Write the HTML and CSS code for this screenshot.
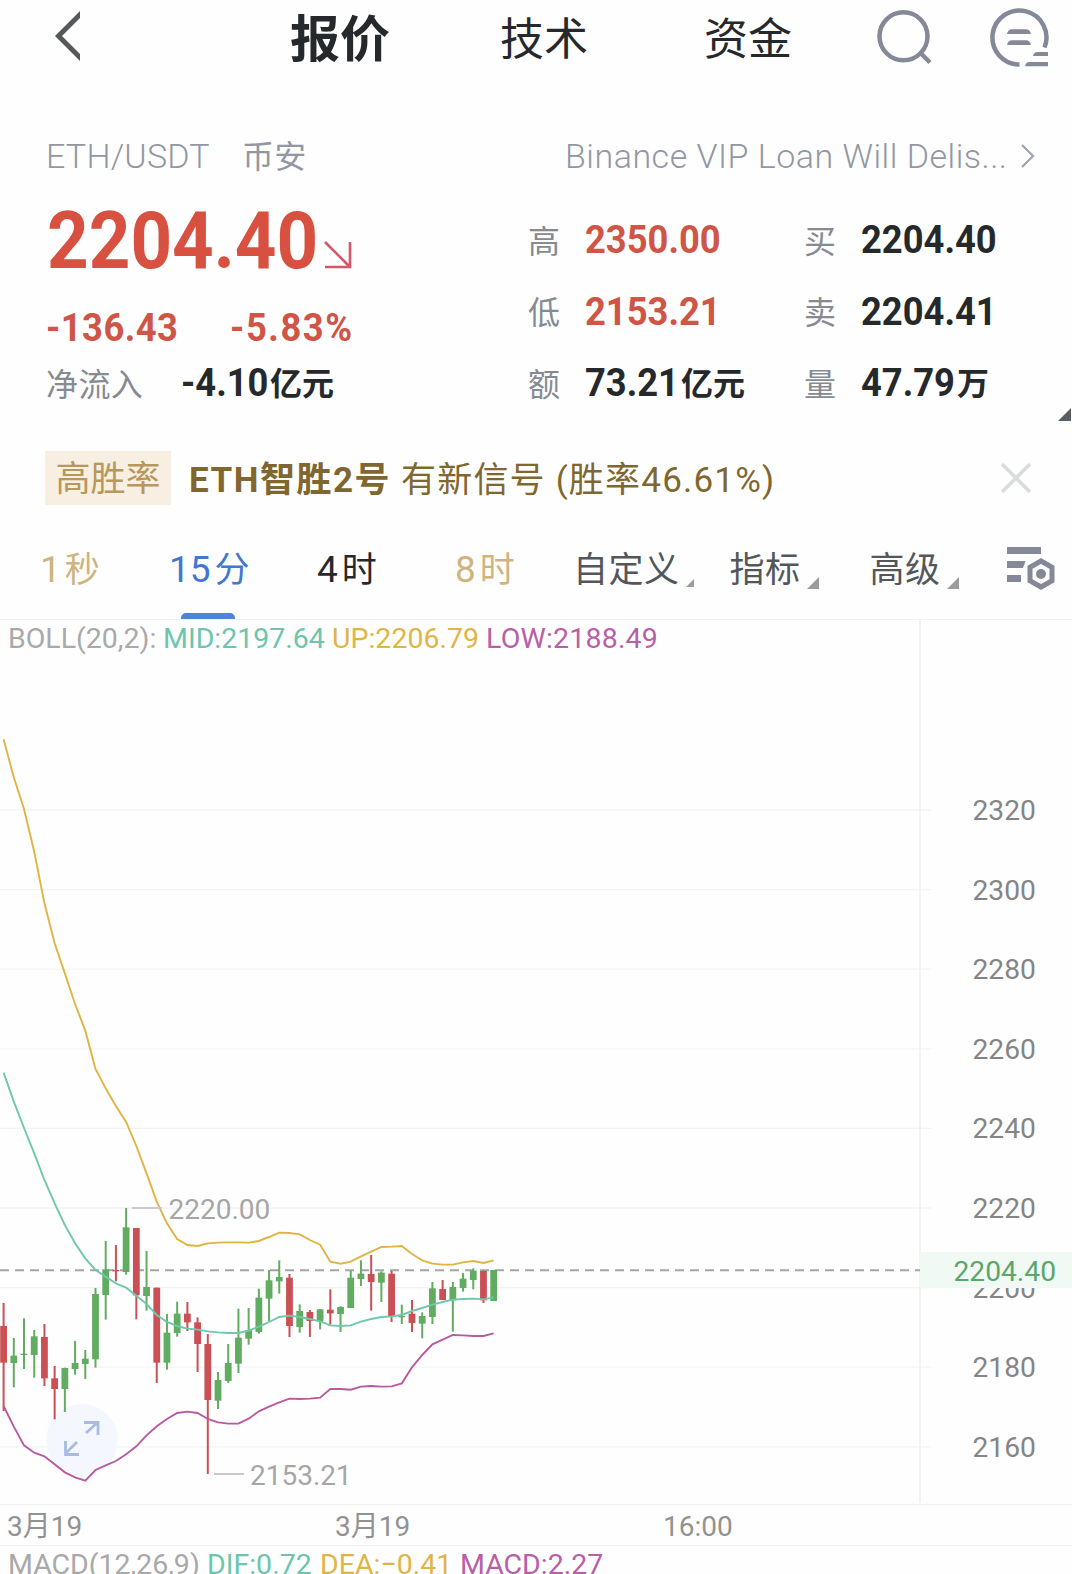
FILE: index.html
```html
<!DOCTYPE html>
<html lang="zh-CN">
<head>
    <meta charset="UTF-8">
    <meta name="viewport" content="width=device-width, initial-scale=1.0">
    <title>ETH/USDT 报价</title>
    <link rel="stylesheet" href="styles.css">
</head>
<body>
    <header class="top-bar">
        <svg class="back" width="30" height="54" viewBox="0 0 30 54"><path d="M28 2 V9 L10 27 L28 45 V52 L3 27z" fill="#53585c"/></svg>
        <nav class="nav">
            <a class="nav-item active">报价</a>
            <a class="nav-item">技术</a>
            <a class="nav-item">资金</a>
        </nav>
        <svg class="search" width="60" height="60" viewBox="0 0 60 60" fill="none" stroke="#858997" stroke-width="4.500">
            <circle cx="29.500" cy="29.300" r="24"/>
            <path d="M46.500 46 L56 55.500"/>
        </svg>
        <svg class="menu" width="62" height="62" viewBox="0 0 62 62">
            <path d="M30.500 58.500 A27 27 0 1 1 55.500 41.500" fill="none" stroke="#858997" stroke-width="4.500"/>
            <path d="M18 28 q1 -4.700 5 -4.700 h14 q4 0 5 4.700z M18 39 q1 -4.700 5 -4.700 h14 q4 0 5 4.700z M44 50 q1 -4 4 -4 h11 v4z M36 60.300 q1 -4.300 4 -4.300 h19 v4.300z" fill="#858997"/>
        </svg>
    </header>

    <div class="symbol-row">
        <span class="symbol">ETH/USDT</span>
        <span class="exchange">币安</span>
        <span class="news">Binance VIP Loan Will Delis...</span>
        <svg width="16" height="26" viewBox="0 0 16 26"><path d="M1 2 L12 13 L1 24" fill="none" stroke="#a0a5ac" stroke-width="2.300"/></svg>
    </div>

    <section class="quote">
        <div class="quote-left">
            <div class="price-row">
                <span class="price">2204.40</span>
                <svg class="trend" width="30" height="30" viewBox="0 0 30 30"><path d="M2 2 L26 26 M27 2 V27 H2" fill="none" stroke="#d9566a" stroke-width="2.600"/></svg>
            </div>
            <div class="change-row">
                <span class="num change">-136.43</span>
                <span class="num percent">-5.83%</span>
            </div>
            <div class="flow-row">
                <span class="label">净流入</span>
                <span class="num">-4.10</span><span class="unit">亿元</span>
            </div>
        </div>
        <div class="quote-right">
            <span class="label">高</span><span class="value red"><span class="num">2350.00</span></span>
            <span class="label">买</span><span class="value"><span class="num">2204.40</span></span>
            <span class="label">低</span><span class="value red"><span class="num">2153.21</span></span>
            <span class="label">卖</span><span class="value"><span class="num">2204.41</span></span>
            <span class="label">额</span><span class="value"><span class="num">73.21</span><span class="unit">亿元</span></span>
            <span class="label">量</span><span class="value"><span class="num">47.79</span><span class="unit">万</span></span>
        </div>
        <i class="corner"></i>
    </section>

    <div class="signal">
        <span class="badge">高胜率</span>
        <b class="signal-name">ETH智胜2号</b>
        <span class="signal-text">有新信号 (胜率46.61%)</span>
        <svg class="close" width="32" height="32" viewBox="0 0 32 32"><path d="M2 2 L30 30 M30 2 L2 30" stroke="#d9dcdd" stroke-width="3.500"/></svg>
    </div>

    <div class="periods">
        <a class="period gold"><span class="n">1</span>秒</a>
        <a class="period selected"><span class="n">15</span>分</a>
        <a class="period"><span class="n">4</span>时</a>
        <a class="period gold"><span class="n">8</span>时</a>
        <a class="period more small">自定义</a>
        <a class="period more">指标</a>
        <a class="period more">高级</a>
        <svg class="settings" width="50" height="44" viewBox="0 0 50 44">
            <path d="M1 1h34v7H1z M1 15h18.500l-2.500 7H1z M1 29h14v7H1z" fill="#858997"/>
            <path d="M35 15 L46 21.300 V34.700 L35 41 L24 34.700 V21.300z" fill="none" stroke="#858997" stroke-width="5"/>
            <circle cx="35" cy="28" r="5" fill="#858997"/>
        </svg>
    </div>

    <div class="chart">
        <div class="legend">
            <span class="boll">BOLL(20,2):</span>
            <span class="mid">MID:2197.64</span>
            <span class="up">UP:2206.79</span>
            <span class="low">LOW:2188.49</span>
        </div>
        <svg id="kline" width="1072" height="883" viewBox="0 620 1072 883">
            <g id="grid"></g>
            <circle cx="82" cy="1440" r="36" fill="#f4f8fe"/>
            <path d="M86 1433 L98 1422 M84 1422.500 H98 V1435 M77 1442 L66 1453 M65.500 1441 V1454.500 H79" fill="none" stroke="#a9bce0" stroke-width="2.800"/>
            <path d="M0 1270.300 H920" stroke="#a5a5a5" stroke-width="2" stroke-dasharray="9 6"/>
            <g id="candles"></g>
            <g id="lines" fill="none" stroke-width="1.900"></g>
            <path d="M132 1208 H162 M214 1474 H244" stroke="#c9c9c9" stroke-width="1.800"/>
            <g class="marks">
                <text x="168.500" y="1218.500">2220.00</text>
                <text x="250" y="1485">2153.21</text>
            </g>
            <rect x="920" y="1252" width="152" height="36" fill="#f1f9f4"/>
            <text class="current" x="953.500" y="1281">2204.40</text>
        </svg>
    </div>

    <div class="dates">
        <span>3月19</span>
        <span>3月19</span>
        <span>16:00</span>
    </div>
    <div class="legend macd">
        <span class="boll">MACD(12,26,9)</span>
        <span class="mid">DIF:0.72</span>
        <span class="up">DEA:−0.41</span>
        <span class="low">MACD:2.27</span>
    </div>

    <script>
        // color, high, body top, body bottom, low
        var candles = [
            ["r",369,438,548,693], ["g",474,527,549,622], ["g",415,521,525,567], ["g",450,469,525,593],
            ["r",432,471,595,618], ["r",558,595,627,718], ["g",563,564,627,696], ["g",483,549,567,584],
            ["g",510,536,552,597], ["g",324,342,538,563], ["g",183,268,345,419], ["r",195,270,274,304],
            ["g",84,142,276,284], ["r",144,144,346,418], ["g",213,321,348,392], ["r",323,323,548,609],
            ["g",402,458,548,569], ["g",365,401,459,470], ["r",366,401,427,453], ["r",412,427,492,576],
            ["r",462,492,660,882], ["g",576,600,662,687], ["g",492,549,603,609], ["g",386,473,551,579],
            ["g",384,450,476,494], ["g",326,353,456,461], ["g",270,301,356,424], ["g",241,291,304,341],
            ["r",282,293,438,471], ["g",373,393,441,458], ["r",390,396,423,471], ["g",387,388,424,448],
            ["r",328,389,400,434], ["g",379,381,402,456], ["g",272,293,384,384], ["g",241,281,297,318],
            ["r",225,282,306,392], ["g",274,278,308,366], ["r",273,281,408,426], ["g",374,408,412,432],
            ["r",360,401,429,456], ["g",397,408,431,475], ["g",306,325,411,432], ["r",300,327,360,360],
            ["g",306,321,361,455], ["g",279,296,324,335], ["g",265,272,300,328], ["r",272,273,361,369],
            ["g",270,270,363,363]
        ];
        var lines = {
            "#dfb443": [-1322,-1208,-1113,-985,-830,-710,-620,-528,-448,-333,-275,-222,-174,-102,-20,65,130,177,195,198,190,188,187,187,188,183,171,158,159,163,180,194,245,251,245,229,215,201,200,198,222,241,251,254,254,247,243,249,241],
            "#6fc7ae": [-322,-235,-156,-80,0,70,135,190,235,270,290,310,323,347,372,405,426,438,446,449,454,457,459,459,452,440,426,411,407,411,417,424,436,438,436,425,417,411,409,405,393,384,374,366,359,357,356,358,352],
            "#b95a9f": [678,740,796,818,829,853,877,892,902,870,856,843,823,799,766,739,717,699,695,699,717,727,731,731,716,694,680,667,656,657,656,653,627,627,629,620,618,620,619,610,562,525,493,479,465,466,468,468,460]
        };

        function x(i) { return 3.600 + i * 10.210; }
        function y(v) { return 1180 + v / 3; }

        var html = "";
        for (var i = 0; i < 9; i++) {
            var gy = 810 + i * 79.600;
            html += '<path d="M0 ' + gy + ' H931" stroke="#f3f3f3" stroke-width="1.300"/>';
            html += '<text x="972.500" y="' + (gy + 10) + '">' + (2320 - i * 20) + '</text>';
        }
        html += '<path d="M920 620 V1503" stroke="#f1f1f1" stroke-width="1.800"/>';
        document.getElementById("grid").innerHTML = html;

        html = "";
        candles.forEach(function(c, i) {
            var color = c[0] == "r" ? "#cb5055" : "#62ac62";
            html += '<path d="M' + x(i) + ' ' + y(c[1]) + ' V' + y(c[4]) + '" stroke="' + color + '" stroke-width="2"/>';
            html += '<rect x="' + (x(i) - 3.400) + '" y="' + y(c[2]) + '" width="6.800" height="' + (c[3] - c[2]) / 3 + '" fill="' + color + '"/>';
        });
        document.getElementById("candles").innerHTML = html;

        html = "";
        for (var color in lines) {
            var points = lines[color].map(function(v, i) { return x(i) + "," + y(v); });
            html += '<polyline points="' + points.join(" ") + '" stroke="' + color + '"/>';
        }
        document.getElementById("lines").innerHTML = html;
    </script>
</body>
</html>
```
FILE: styles.css
```css
* {
    box-sizing: border-box;
}
body {
    margin: 0;
    width: 1072px;
    height: 1574px;
    overflow: hidden;
    background-color: #fefefe;
    color: #26292c;
    font-family: Roboto, "Noto Sans CJK SC", sans-serif;
    line-height: 1.2;
}
svg {
    display: block;
    flex: none;
}
.top-bar {
    display: flex;
    align-items: center;
    height: 76px;
    padding-left: 52px;
}
.back {
    margin-top: -4px;
}
.nav {
    display: flex;
    align-items: center;
    height: 76px;
    margin-left: 208px;
    padding-top: 3px;
    width: 584px;
}
.nav-item {
    font-size: 44px;
    line-height: 76px;
    white-space: nowrap;
    margin-right: 116px;
}
.nav-item.active {
    font-size: 50px;
    font-weight: bold;
    margin-right: 110px;
}
.search {
    margin-top: -2px;
}
.menu {
    margin: -3px 0 0 55px;
}
.symbol-row {
    display: flex;
    align-items: center;
    height: 48px;
    margin-top: 56px;
    padding-left: 46px;
    color: #9297a3;
    font-size: 34px;
    font-weight: 300;
    letter-spacing: 0.2px;
}
.symbol {
    width: 196px;
}
.exchange {
    width: 323px;
    padding-top: 2px;
    font-size: 32px;
    font-weight: normal;
}
.news {
    width: 456px;
    letter-spacing: 0.5px;
    white-space: nowrap;
}
.quote {
    display: flex;
    position: relative;
    height: 214px;
    margin-top: 24px;
    padding-left: 46px;
}
.quote-left {
    width: 482px;
}
.price-row {
    display: flex;
    height: 72px;
    margin-bottom: 23px;
    padding-left: 1px;
    color: #d85040;
}
.price {
    width: 276px;
    font-size: 79px;
    font-weight: bold;
    line-height: 74px;
    transform: scaleX(0.92);
    transform-origin: left;
}
.trend {
    margin-top: 36px;
}
.num {
    display: inline-block;
    font-size: 39.5px;
    font-weight: bold;
    transform: scaleX(0.92);
    transform-origin: left;
}
.change-row {
    display: flex;
    align-items: center;
    height: 56px;
    padding-top: 2px;
    color: #cf5546;
}
.change {
    width: 184px;
    letter-spacing: 0.5px;
}
.percent {
    letter-spacing: 1.7px;
}
.flow-row {
    display: flex;
    align-items: center;
    height: 56px;
}
.flow-row .label {
    width: 135px;
    letter-spacing: 0.4px;
}
.label {
    padding-top: 4px;
    color: #868b92;
    font-size: 32px;
}
.unit {
    padding-top: 3px;
    font-size: 32px;
    font-weight: bold;
    margin-left: -6px;
}
.quote-right {
    display: grid;
    grid-template-columns: 57px 219px 57px 200px;
    grid-template-rows: repeat(3, 71.5px);
    align-items: center;
}
.value {
    display: flex;
    align-items: center;
}
.red {
    color: #cf5546;
}
.corner {
    position: absolute;
    right: 1px;
    bottom: -3px;
    border-left: 13px solid transparent;
    border-bottom: 13px solid #5a5e62;
}
.signal {
    display: flex;
    align-items: center;
    height: 54px;
    margin-top: 33px;
    padding-left: 45px;
    color: #80672f;
    font-size: 35px;
    white-space: nowrap;
}
.badge {
    width: 126px;
    height: 54px;
    line-height: 57px;
    text-align: center;
    background-color: #f7efe2;
    color: #b8975c;
}
.signal-name {
    width: 212px;
    margin-left: 18px;
    padding-top: 5px;
    letter-spacing: 1.5px;
}
.signal-text {
    width: 600px;
    padding-top: 5px;
    letter-spacing: 1.2px;
}
.close {
    margin-left: -1px;
}
.periods {
    display: flex;
    align-items: center;
    height: 115px;
    border-bottom: 1.5px solid #f1f1f1;
    font-size: 35px;
    white-space: nowrap;
    padding: 12px 0 0 40px;
}
.period {
    display: flex;
    align-items: center;
    position: relative;
    height: 60px;
    padding-top: 5px;
}
.n {
    font-size: 37px;
    margin-right: 4px;
}
.gold {
    color: #cfb47f;
}
.selected {
    color: #4277cf;
}
.selected::after {
    content: "";
    position: absolute;
    left: 12px;
    bottom: -21px;
    width: 54px;
    height: 6px;
    border-radius: 5px 5px 0 0;
    background-color: #4a85d6;
}
.more {
    color: #53575c;
    letter-spacing: 0.5px;
}
.more::after {
    content: "";
    position: absolute;
    right: -18px;
    bottom: 9px;
    border-left: 12px solid transparent;
    border-bottom: 12px solid #9c9c9c;
}
.more.small::after {
    right: -14px;
    bottom: 11px;
    border-width: 8px;
    border-top: 0;
    border-right: 0;
}
.period:nth-child(1) {
    width: 129px;
}
.period:nth-child(2) {
    width: 148px;
}
.period:nth-child(3) {
    width: 138px;
}
.period:nth-child(4) {
    width: 118px;
}
.period:nth-child(5) {
    margin-right: 50px;
}
.period:nth-child(6) {
    margin-right: 69px;
}
.settings {
    margin-left: 65px;
}
.chart {
    height: 885px;
    border-bottom: 1.5px solid #f1f1f1;
}
.legend {
    display: flex;
    height: 36px;
    align-items: center;
    padding: 2px 0 0 8px;
    font-size: 28.5px;
    white-space: nowrap;
}
/* the plot starts under the legend, so the axis reaches the top border */
#kline {
    margin-top: -36px;
}
.boll {
    color: #a9a9a9;
    width: 155px;
}
.mid {
    color: #6dc5ac;
    width: 169px;
}
.up {
    color: #e0b548;
    width: 154px;
}
.low {
    color: #b95fa8;
    letter-spacing: 0.2px;
}
#kline text {
    font-size: 28.2px;
    fill: #858585;
}
#kline .marks text {
    font-size: 28px;
    fill: #a6a6a6;
}
#kline .current {
    fill: #5aa869;
}
.dates {
    display: flex;
    align-items: center;
    height: 41px;
    padding: 3px 0 0 7px;
    border-bottom: 1.5px solid #f1f1f1;
    font-size: 28px;
    color: #929292;
}
.dates span {
    width: 328px;
}
.macd {
    height: 37px;
}
.macd .boll {
    width: 199px;
}
.macd .mid {
    width: 113px;
}
.macd .up {
    width: 140px;
}
.macd .low {
    letter-spacing: 0;
}
```
